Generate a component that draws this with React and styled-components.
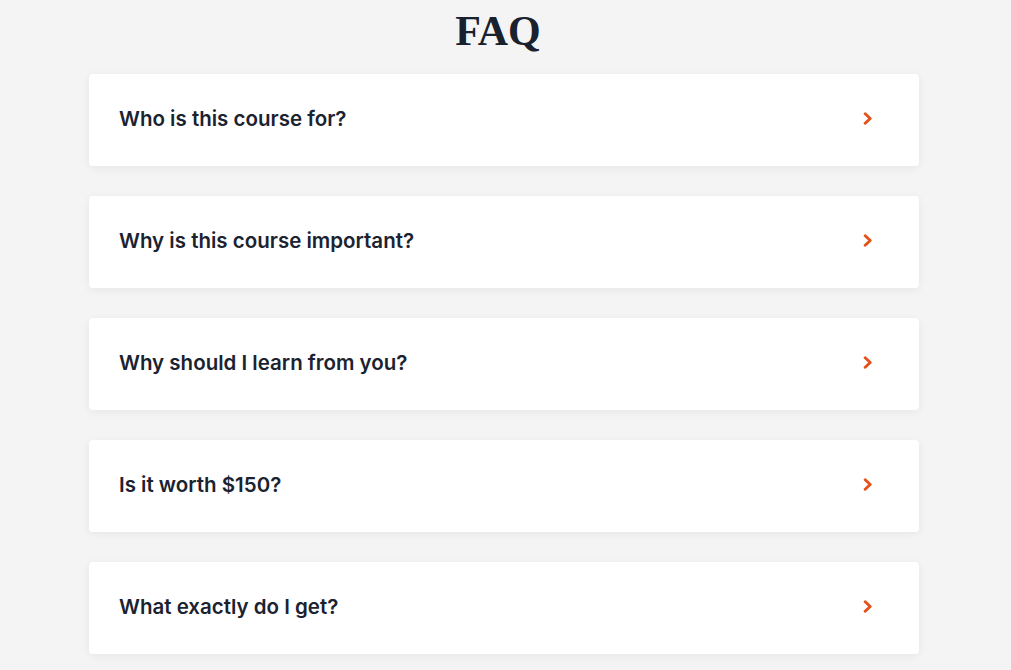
import React from "react";
import styled, { createGlobalStyle } from "styled-components";

const GlobalStyle = createGlobalStyle`
  html, body {
    margin: 0;
    padding: 0;
    background: #f4f4f4;
  }
  * { box-sizing: border-box; }
`;

const Page = styled.section`
  display: flex;
  flex-direction: column;
  align-items: center;
  padding: 4px 3px 40px 0;
  min-height: 670px;
  background: #f4f4f4;
`;

const Title = styled.h1`
  margin: 0 12px 16px 0;
  font-family: "Liberation Serif", "DejaVu Serif", serif;
  font-weight: 700;
  font-size: 42px;
  line-height: 54px;
  color: #19202e;
`;

const List = styled.div`
  display: flex;
  flex-direction: column;
  gap: 30px;
  width: 830px;
`;

const Card = styled.div`
  display: flex;
  align-items: center;
  justify-content: space-between;
  height: 92px;
  padding: 0 46px 3px 30px;
  background: #ffffff;
  border-radius: 4px;
  box-shadow: 0 2px 10px rgba(0, 0, 0, 0.06);
  cursor: pointer;
`;

const Question = styled.span`
  font-family: Inter, "Noto Sans", sans-serif;
  font-weight: 600;
  font-size: 20.5px;
  letter-spacing: 0;
  color: #1b2230;
`;

const Chevron = () => (
  <svg width="10" height="13" viewBox="0 0 10 13" fill="none">
    <path
      d="M2.2 1.8L7.2 6.5L2.2 11.2"
      stroke="#e4521b"
      strokeWidth="2.9"
      strokeLinecap="round"
      strokeLinejoin="round"
    />
  </svg>
);

const questions = [
  "Who is this course for?",
  "Why is this course important?",
  "Why should I learn from you?",
  "Is it worth $150?",
  "What exactly do I get?",
];

export default function App() {
  return (
    <>
      <GlobalStyle />
      <Page>
        <Title>FAQ</Title>
        <List>
          {questions.map((q) => (
            <Card key={q}>
              <Question>{q}</Question>
              <Chevron />
            </Card>
          ))}
        </List>
      </Page>
    </>
  );
}
